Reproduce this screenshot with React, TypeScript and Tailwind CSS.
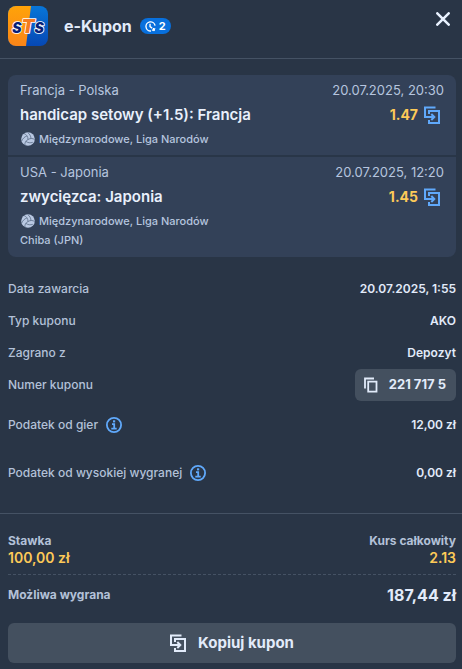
import React from "react";

type Selection = {
  match: string;
  date: string;
  pick: string;
  odds: string;
  league: string;
  venue?: string;
};

const selections: Selection[] = [
  {
    match: "Francja - Polska",
    date: "20.07.2025, 20:30",
    pick: "handicap setowy (+1.5): Francja",
    odds: "1.47",
    league: "Międzynarodowe, Liga Narodów",
  },
  {
    match: "USA - Japonia",
    date: "20.07.2025, 12:20",
    pick: "zwycięzca: Japonia",
    odds: "1.45",
    league: "Międzynarodowe, Liga Narodów",
    venue: "Chiba (JPN)",
  },
];

const details = [
  { label: "Data zawarcia", value: "20.07.2025, 1:55" },
  { label: "Typ kuponu", value: "AKO" },
  { label: "Zagrano z", value: "Depozyt" },
];

const taxes = [
  { label: "Podatek od gier", value: "12,00 zł" },
  { label: "Podatek od wysokiej wygranej", value: "0,00 zł" },
];

function Logo() {
  return (
    <svg viewBox="0 0 40 40" className="size-10 shrink-0" role="img" aria-label="STS">
      <defs>
        <linearGradient id="logoOrange" x1="0" y1="0" x2="0" y2="1">
          <stop offset="0" stopColor="#ffa309" />
          <stop offset="1" stopColor="#fa8518" />
        </linearGradient>
        <linearGradient id="logoBlue" x1="0" y1="0" x2="0" y2="1">
          <stop offset="0" stopColor="#0876d8" />
          <stop offset="1" stopColor="#0648b4" />
        </linearGradient>
        <clipPath id="logoShape">
          <rect width="40" height="40" rx="8" />
        </clipPath>
      </defs>
      <g clipPath="url(#logoShape)">
        <rect width="40" height="40" fill="url(#logoBlue)" />
        <path d="M0 0h23l-5 40H0z" fill="url(#logoOrange)" />
      </g>
      <text
        x="20"
        y="27"
        textAnchor="middle"
        fontFamily="Inter, sans-serif"
        fontWeight="900"
        fontStyle="italic"
        fontSize="14"
        fill="#071f78"
        stroke="#fff"
        strokeWidth="1.600"
        strokeLinejoin="round"
        paintOrder="stroke"
      >
        S<tspan fontSize="19" fill="#f47b20">T</tspan>S
      </text>
    </svg>
  );
}

function CopyCouponIcon({ className }: { className: string }) {
  return (
    <svg viewBox="0 0 16 18" className={className} fill="none" stroke="currentColor" strokeWidth="2" aria-hidden="true">
      <path d="M11.500 1.500H1v9.500h8" />
      <path d="M5 8V5h10v12H5v-3" />
      <path d="M7.300 8 10.300 11l-3 3" />
    </svg>
  );
}

function VolleyballIcon() {
  return (
    <svg viewBox="0 0 14 14" className="size-3.5 shrink-0" fill="none" aria-hidden="true">
      <circle cx="7" cy="7" r="6.800" fill="#b9c8e2" />
      <g stroke="#5b6c87" strokeWidth="0.800">
        <path d="M7 7.500C7 4.500 5.500 2.500 3 1.500" />
        <path d="M7 7.500c2.500-1.500 5-1.300 6.700.2" />
        <path d="M7 7.500c-2.500 1.500-3.400 3.500-3 5.600" />
        <path d="M5.800 4C3.500 4.800 1.800 6.500.7 9" />
        <path d="M10 6.600C9.900 4.200 8.700 2 6.700.5" />
        <path d="M4.800 9.300c2 1.600 4.600 1.900 7 1" />
      </g>
    </svg>
  );
}

function CashoutIcon() {
  return (
    <svg viewBox="0 0 12 12" className="size-[11px]" fill="none" stroke="currentColor" strokeWidth="1.500" aria-hidden="true">
      <path d="M11 5A5 5 0 1 0 6.500 10.900" />
      <path d="M5.500 3v3.200l2.300 1.600" />
      <path d="M7.500 10h3.300M9.500 7.500v2.500" />
      <path d="M8 8.500 11.500 8 9.800 11.500z" fill="currentColor" stroke="none" />
    </svg>
  );
}

function InfoIcon() {
  return (
    <svg viewBox="0 0 16 16" className="size-4" fill="none" stroke="currentColor" aria-hidden="true">
      <circle cx="8" cy="8" r="7.100" strokeWidth="1.800" />
      <path d="M6 7.200h2.200v4.300M5.300 11.600h5.400" strokeWidth="1.800" />
      <path d="M7 3.300h2.200v2.100H7z" fill="currentColor" stroke="none" />
    </svg>
  );
}

function SelectionItem({ item }: { item: Selection }) {
  return (
    <li className="px-3 pt-[5px] pb-[7px]">
      <div className="flex justify-between text-[13px] leading-5 text-[#b6c5df]">
        <span>{item.match}</span>
        <time>{item.date}</time>
      </div>
      <div className="flex h-[30px] items-center justify-between font-semibold text-[#e9f0fc]">
        <h2 className="text-[15px]">{item.pick}</h2>
        <div className="flex items-center gap-1.5 pr-1">
          <span className="text-sm font-bold text-[#fdca58]">{item.odds}</span>
          <button type="button" aria-label="Kopiuj zdarzenie" className="text-[#60a9fb]">
            <CopyCouponIcon className="h-[18px] w-4" />
          </button>
        </div>
      </div>
      <div className="flex items-center gap-1 pl-px text-[11px] leading-[18px] font-medium text-[#b6c5df]">
        <VolleyballIcon />
        <span>{item.league}</span>
      </div>
      {item.venue && <p className="text-[11px] leading-5 font-medium text-[#b6c5df]">{item.venue}</p>}
    </li>
  );
}

export default function App() {
  return (
    <main className="min-h-screen bg-[#293546] pb-1.5 font-['Inter',sans-serif] text-[#e2ebfa]">
      <header className="flex items-start justify-between border-b border-[#455264] pt-1.5 pr-1.5 pb-3 pl-2">
        <div className="flex items-center">
          <Logo />
          <h1 className="ml-4 text-base leading-6 font-bold">e-Kupon</h1>
          <span className="ml-2 flex h-4 items-center gap-[3px] rounded-full bg-[#0870dd] px-[5px] text-[11px] font-bold text-white">
            <CashoutIcon />2
          </span>
        </div>
        <button type="button" aria-label="Zamknij" className="p-1.5">
          <svg viewBox="0 0 14 14" className="size-3.5" fill="none" stroke="#e9f2ff" strokeWidth="2.500" strokeLinecap="round" aria-hidden="true">
            <path d="m1.300 1.300 11.400 11.400M12.700 1.300 1.300 12.700" />
          </svg>
        </button>
      </header>

      <div className="pt-4 pr-1.5 pl-2">
        <ul className="divide-y-2 divide-[#293648] rounded-lg bg-[#334158]">
          {selections.map((item) => (
            <SelectionItem key={item.match} item={item} />
          ))}
        </ul>

        <dl className="mt-4 text-xs font-medium">
          {details.map((row) => (
            <div key={row.label} className="flex h-8 items-center justify-between">
              <dt className="text-[#b3c1d8]">{row.label}</dt>
              <dd className="font-semibold">{row.value}</dd>
            </div>
          ))}
          <div className="flex h-8 items-center justify-between">
            <dt className="text-[#b3c1d8]">Numer kuponu</dt>
            <dd>
              <button type="button" className="flex h-8 items-center gap-2.5 rounded-md bg-[#44505f] pr-2.5 pl-2 text-[13px] font-bold">
                <svg viewBox="0 0 16 16" className="size-4" fill="none" stroke="currentColor" strokeWidth="1.800" aria-hidden="true">
                  <path d="M2 11.500V1.500h9M5.200 4.700h8.300v10H5.200z" />
                </svg>
                221 717 5
              </button>
            </dd>
          </div>
          {taxes.map((row) => (
            <div key={row.label} className="flex h-12 items-center justify-between">
              <dt className="flex items-center gap-2 text-[#b3c1d8]">
                {row.label}
                <button type="button" aria-label={`Informacja: ${row.label}`} className="text-[#60a9fb]">
                  <InfoIcon />
                </button>
              </dt>
              <dd className="font-semibold">{row.value}</dd>
            </div>
          ))}
        </dl>
      </div>

      <section className="mt-4 border-t border-[#455264] pt-[19px] pr-1.5 pl-2">
        <dl>
          <div className="flex justify-between border-b border-dashed border-[#455264] pb-[7px] text-xs leading-4 font-bold">
            <div>
              <dt className="text-[#b3c1d8]">Stawka</dt>
              <dd className="text-sm leading-[18px] font-semibold text-[#fdca58]">100,00 zł</dd>
            </div>
            <div className="text-right">
              <dt className="text-[#b3c1d8]">Kurs całkowity</dt>
              <dd className="text-sm leading-[18px] font-semibold text-[#fdca58]">2.13</dd>
            </div>
          </div>
          <div className="flex h-10 items-center justify-between font-bold">
            <dt className="text-xs text-[#b3c1d8]">Możliwa wygrana</dt>
            <dd className="text-base">187,44 zł</dd>
          </div>
        </dl>
        <button type="button" className="mt-2 flex h-10 w-full items-center justify-center gap-3 rounded-md bg-[#44505f] text-[15px] font-bold">
          <CopyCouponIcon className="h-[18px] w-4" />
          Kopiuj kupon
        </button>
      </section>
    </main>
  );
}
